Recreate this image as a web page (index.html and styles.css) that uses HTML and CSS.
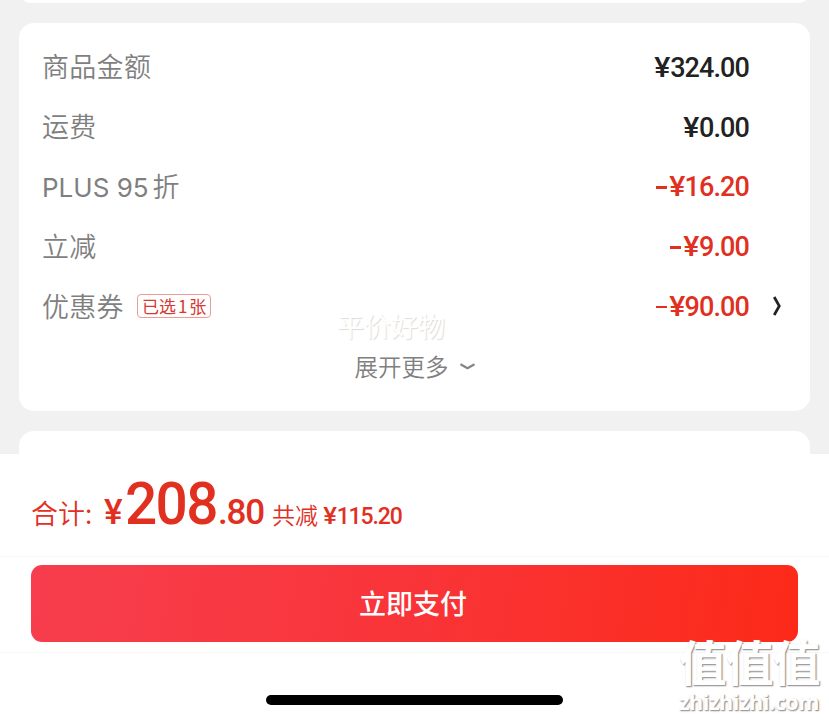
FILE: index.html
```html
<!DOCTYPE html>
<html lang="zh-CN">
<head>
  <meta charset="UTF-8">
  <meta name="viewport" content="width=device-width, initial-scale=1.0">
  <title>立即支付</title>
  <link rel="stylesheet" href="styles.css">
</head>
<body>
  <div class="page">
    <!-- Order details -->
    <div class="order">
      <div class="card card-prev"></div>
      <div class="card card-main">
        <div class="row">
          <span class="label">商品金额</span>
          <span class="price"><span class="sign">¥</span>324.00</span>
        </div>
        <div class="row">
          <span class="label">运费</span>
          <span class="price"><span class="sign">¥</span>0.00</span>
        </div>
        <div class="row">
          <span class="label label-plus"><span class="latin">PLUS 95</span>折</span>
          <span class="price red"><i class="minus"></i><span class="sign">¥</span>16.20</span>
        </div>
        <div class="row">
          <span class="label">立减</span>
          <span class="price red"><i class="minus"></i><span class="sign">¥</span>9.00</span>
        </div>
        <div class="row">
          <span class="label">优惠券</span>
          <span class="tag">已选<b>1</b>张</span>
          <span class="price red"><i class="minus"></i><span class="sign">¥</span>90.00</span>
          <svg class="arrow" width="12" height="22" viewBox="0 0 12 22">
            <path d="M2.2 2 L7.3 11 L2.2 20" fill="none" stroke="#222" stroke-width="2.7"/>
          </svg>
        </div>
        <div class="more">
          <span>展开更多</span>
          <svg width="17" height="10" viewBox="0 0 17 10">
            <path d="M1.5 3.2 L8.5 7.2 L15.5 3.2" fill="none" stroke="#858585" stroke-width="2.2" stroke-linejoin="round"/>
          </svg>
        </div>
        <div class="mark">平价好物</div>
      </div>
      <div class="card card-next"></div>
    </div>

    <!-- Pay bar -->
    <div class="footer">
      <div class="total">
        <span class="total-label">合计:</span>
        <span class="yen">¥</span>
        <span class="big">208</span>
        <span class="cents">.80</span>
        <span class="saved-label">共减</span>
        <span class="saved"><span class="sign">¥</span>115.20</span>
      </div>
      <div class="pay-area">
        <button class="pay">立即支付</button>
      </div>
      <div class="home-bar"></div>
    </div>

    <!-- Site logo -->
    <div class="logo">
      <div class="logo-cn">值值值</div>
      <div class="logo-en">zhizhizhi.com</div>
    </div>
  </div>
</body>
</html>
```
FILE: styles.css
```css
* {
  box-sizing: border-box;
}

body {
  margin: 0;
  background: #fff;
  font-family: "Noto Sans CJK SC", sans-serif;
  font-weight: 350;
  color: #7f7f7f;
}

.page {
  position: relative;
  height: 720px;
  overflow: hidden;
}

.order {
  height: 454px;
  padding: 0 19px;
  background: #f1f1f1;
  display: flex;
  flex-direction: column;
  gap: 20px;
  overflow: hidden;
}

.card {
  background: #fff;
  border-radius: 15px;
  flex-shrink: 0;
}

.card-prev {
  height: 23px;
  margin-top: -20px;
}

.card-main {
  position: relative;
  height: 388px;
  padding: 14px 24px 0 23px;
}

.card-next {
  height: 60px;
}

.row {
  display: flex;
  align-items: center;
  height: 59.8px;
  padding-right: 37px;
  position: relative;
}

.label {
  font-size: 27px;
  line-height: 40px;
  letter-spacing: 0.3px;
  padding-bottom: 1px;
}

.label-plus {
  padding-top: 2px;
}

.latin {
  font-family: Inter, sans-serif;
  font-size: 26px;
  font-weight: 400;
  letter-spacing: 0;
  margin-right: 4px;
}

.price {
  margin-left: auto;
  padding-top: 2px;
  display: flex;
  align-items: center;
  font-family: Roboto, sans-serif;
  font-weight: 500;
  font-size: 27px;
  letter-spacing: -0.9px;
  color: #222;
}

.sign {
  display: inline-block;
  transform: scaleX(1.12);
  margin-right: 1.5px;
}

.red {
  color: #e1301f;
}

.minus {
  width: 11px;
  height: 2.5px;
  margin-right: 3px;
  background: #e1301f;
}

.tag {
  display: flex;
  align-items: center;
  height: 24px;
  margin-left: 13px;
  padding: 0 4px 2px;
  border: 1px solid #ee9a95;
  border-radius: 4px;
  color: #d6392f;
  font-size: 17px;
  font-weight: 400;
}

.tag b {
  margin: 0 2px;
  font-weight: 400;
}

.arrow {
  position: absolute;
  right: 2px;
  top: 19px;
}

.more {
  display: flex;
  align-items: center;
  justify-content: center;
  gap: 10px;
  height: 60px;
  padding-left: 2px;
  font-size: 23.5px;
}

.mark {
  position: absolute;
  left: 318px;
  top: 283px;
  font-size: 27px;
  line-height: 40px;
  font-weight: 400;
  color: #fff;
  text-shadow: 1px 1px 1px #ddd;
}

.footer {
  height: 266px;
  background: #fff;
}

.total {
  display: flex;
  align-items: baseline;
  height: 103px;
  padding: 15px 0 0 31px;
  border-bottom: 1px solid #f8f8f8;
  color: #e1301f;
}

.total-label {
  width: 73px;
  font-size: 27px;
}

.yen, .big, .cents, .saved {
  font-family: Roboto, sans-serif;
  font-weight: 500;
}

.yen {
  width: 21px;
  font-size: 35px;
}

.big {
  width: 93px;
  font-size: 58.5px;
  line-height: 70px;
  transform: scaleX(0.97);
  transform-origin: left;
  letter-spacing: -1.7px;
}

.cents {
  width: 54px;
  font-size: 35px;
  letter-spacing: -1.2px;
}

.saved-label {
  width: 52px;
  font-size: 23px;
}

.saved {
  font-size: 23px;
  letter-spacing: -1.1px;
}

.pay-area {
  height: 96px;
  padding: 8px 31px 0;
  border-bottom: 1px solid #f8f8f8;
}

.pay {
  width: 100%;
  height: 77px;
  padding: 0 3px 2px 0;
  border: none;
  border-radius: 11px;
  background: linear-gradient(100deg, #f73e4e, #f93438 50%, #fc2a18);
  color: #fff;
  font-family: inherit;
  font-size: 27px;
  font-weight: 500;
}

.home-bar {
  width: 297px;
  height: 10px;
  margin: 42px 0 0 266px;
  border-radius: 5px;
  background: #000;
}

.logo {
  position: absolute;
  left: 679px;
  top: 635px;
  color: #fff;
  text-shadow: 1px 1px 1px #999, 1px 1px 2px #bbb;
}

.logo-cn {
  font-size: 47.5px;
  line-height: 52px;
  letter-spacing: -0.5px;
  font-weight: 700;
}

.logo-en {
  font-family: "Open Sans", sans-serif;
  font-size: 21.5px;
  line-height: 29px;
  font-weight: 700;
  letter-spacing: -0.4px;
}
```
